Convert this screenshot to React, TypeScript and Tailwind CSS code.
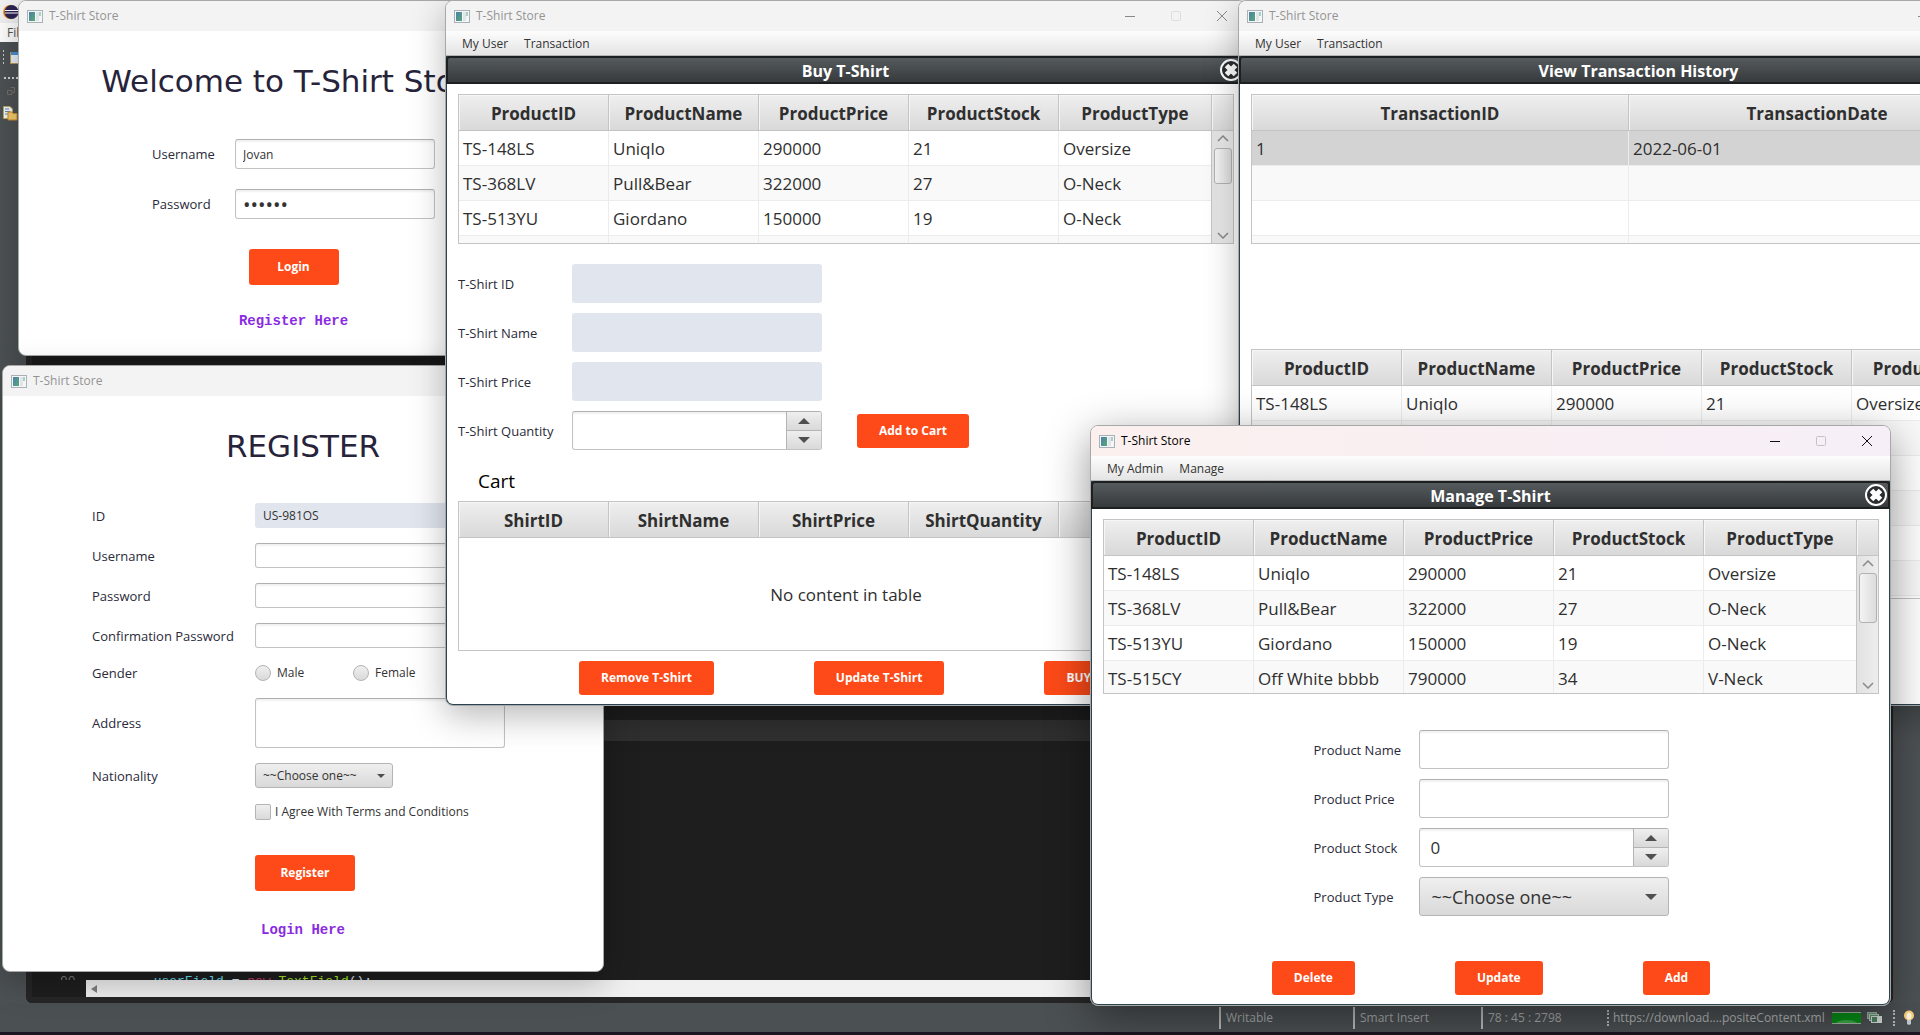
import type { ReactNode } from "react";

const PRODUCTS = [
  ["TS-148LS", "Uniqlo", "290000", "21", "Oversize"],
  ["TS-368LV", "Pull&Bear", "322000", "27", "O-Neck"],
  ["TS-513YU", "Giordano", "150000", "19", "O-Neck"],
  ["TS-515CY", "Off White bbbb", "790000", "34", "V-Neck"],
];
const PRODUCT_COLUMNS = ["ProductID", "ProductName", "ProductPrice", "ProductStock", "ProductType"];
const BLANK_ROW = ["", "", "", "", ""];

const HEAD_CELL =
  "h-9 border-b border-[#c4c4c4] bg-linear-to-b from-[#efefef] to-[#d9d9d9] shadow-[inset_1px_1px_0_#f6f6f6]";

function AppIcon() {
  return (
    <svg width="16" height="13" viewBox="0 0 16 13" className="shrink-0">
      <defs>
        <linearGradient id="pane" x1="0" y1="0" x2="1" y2="1">
          <stop offset="0" stopColor="#4f7fa8" />
          <stop offset="1" stopColor="#54a878" />
        </linearGradient>
      </defs>
      <rect x="0.5" y="0.5" width="15" height="12" fill="#f4f6f7" stroke="#a9b1b6" />
      <rect x="2" y="2" width="6" height="9" fill="url(#pane)" />
      <rect x="9" y="2" width="3" height="9" fill="#e2e5e8" />
      <rect x="12" y="2" width="2" height="4" fill="#a8cfc4" />
    </svg>
  );
}

function WindowButtons({ active }: { active?: boolean }) {
  const ink = active ? "#111111" : "#888888";
  const faint = active ? "#c9c0c6" : "#dddddd";
  const box = "flex h-full w-[46px] items-center justify-center";
  return (
    <div className="ml-auto flex h-full">
      <button aria-label="Minimize" className={box}>
        <svg width="10" height="10"><path d="M0 5.5H10" stroke={ink} /></svg>
      </button>
      <button aria-label="Maximize" className={box}>
        <svg width="10" height="10"><rect x="0.5" y="0.5" width="9" height="9" rx="1" fill="none" stroke={faint} /></svg>
      </button>
      <button aria-label="Close" className={box}>
        <svg width="10" height="10"><path d="M0 0L10 10M10 0L0 10" stroke={ink} /></svg>
      </button>
    </div>
  );
}

function Window({
  place,
  active,
  children,
}: {
  place: string;
  active?: boolean;
  children: ReactNode;
}) {
  return (
    <section
      className={`absolute flex flex-col overflow-hidden rounded-lg border border-[#a8a8a8] bg-white ${
        active ? "shadow-[0_12px_44px_rgba(0,0,0,0.42)]" : "shadow-[0_10px_34px_rgba(0,0,0,0.28)]"
      } ${place}`}
    >
      <header
        className={`flex h-[30px] shrink-0 items-center gap-1.5 pl-2 text-xs ${
          active ? "bg-linear-to-r from-[#fbf0ee] to-[#f7eff8] text-black" : "bg-[#f3f3f3] text-[#939393]"
        }`}
      >
        <AppIcon />
        <h1>T-Shirt Store</h1>
        <WindowButtons active={active} />
      </header>
      {children}
    </section>
  );
}

function MenuBar({ items }: { items: string[] }) {
  return (
    <nav className="flex h-[25px] shrink-0 items-center gap-4 border-b border-[#b4b4b4] bg-linear-to-b from-[#fdfdfd] to-[#e4e4e4] pt-0.5 pl-4 text-xs text-[#333333]">
      {items.map((item) => (
        <button key={item}>{item}</button>
      ))}
    </nav>
  );
}

function Frame({ title, children }: { title: string; children: ReactNode }) {
  return (
    <div className="flex grow flex-col bg-[#2b4250]">
      <div className="relative flex h-7 shrink-0 items-center justify-center rounded-t-sm border-2 border-[#1d2021] bg-linear-to-b from-[#565b5e] to-[#363a3c]">
        <h2 className="pt-0.5 text-base font-bold text-white">{title}</h2>
        <button aria-label="Close frame" className="absolute top-0 right-0">
          <svg width="24" height="24" viewBox="0 0 24 24">
            <circle cx="12" cy="12" r="10" fill="#2b2e30" stroke="#ffffff" strokeWidth="2" />
            <path d="M7.500 7.500L16.500 16.500M16.500 7.500L7.500 16.500" stroke="#ffffff" strokeWidth="5" />
          </svg>
        </button>
      </div>
      <div className="mx-px mb-px flex grow flex-col rounded-b-md bg-white pt-2.5 pr-2.5 pl-[11px]">{children}</div>
    </div>
  );
}

function ScrollColumn({ thumb }: { thumb: string }) {
  return (
    <div className="flex w-[22px] shrink-0 flex-col border-l border-[#c4c4c4]">
      <div className={`${HEAD_CELL} shrink-0`} />
      <div className="flex grow flex-col items-center bg-linear-to-r from-[#e2e2e2] to-[#ededed] py-1">
        <svg width="12" height="7" className="shrink-0"><path d="M1 6L6 1L11 6" fill="none" stroke="#8a8a8a" strokeWidth="1.5" /></svg>
        <div className={`mt-1.5 w-[18px] rounded-[3px] border border-[#b2b2b2] bg-linear-to-r from-[#f4f4f4] to-[#dcdcdc] ${thumb}`} />
        <svg width="12" height="7" className="mt-auto shrink-0"><path d="M1 1L6 6L11 1" fill="none" stroke="#8a8a8a" strokeWidth="1.5" /></svg>
      </div>
    </div>
  );
}

function DataTable({
  columns,
  rows,
  colWidth,
  height,
  selected,
  fill,
  thumb,
}: {
  columns: string[];
  rows: string[][];
  colWidth: string;
  height: string;
  selected?: number;
  fill?: boolean;
  thumb?: string;
}) {
  return (
    <div className={`flex shrink-0 overflow-hidden border border-[#c4c4c4] ${height}`}>
      <div className="min-w-0 grow overflow-hidden">
        <table className="w-full table-fixed border-separate border-spacing-0 text-[17px] text-[#2f2f2f]">
          <thead>
            <tr>
              {columns.map((c, i) => (
                <th
                  key={c}
                  className={`${HEAD_CELL} px-0 pt-0.5 pb-0 font-bold leading-6 ${
                    !fill && i === columns.length - 1 ? "" : `border-r ${colWidth}`
                  }`}
                >
                  {c}
                </th>
              ))}
              {fill && <td className={HEAD_CELL} />}
            </tr>
          </thead>
          <tbody>
            {rows.map((row, r) => (
              <tr key={r} className={r === selected ? "bg-[#d3d3d3]" : r % 2 ? "bg-[#f9f9f9]" : "bg-white"}>
                {row.map((cell, c) => (
                  <td
                    key={c}
                    className={`h-[35px] border-b border-[#ececec] px-1 pt-0.5 pb-0 leading-6 whitespace-nowrap ${
                      !fill && c === row.length - 1 ? "" : "border-r"
                    }`}
                  >
                    {cell}
                  </td>
                ))}
                {fill && <td className="border-b border-[#ececec]" />}
              </tr>
            ))}
          </tbody>
        </table>
      </div>
      {thumb && <ScrollColumn thumb={thumb} />}
    </div>
  );
}

const LABEL = "pt-0.5 text-[13px] text-[#2a2a3a]";
const FIELD =
  "rounded-[3px] border border-[#c2c2c2] border-t-[#b0b0b0] bg-white text-[#333333] shadow-[inset_0_2px_2px_rgba(0,0,0,0.06)] outline-none";
const READONLY = "rounded-[3px] bg-[#e1e5ed] text-[#333333] outline-none";
const PICKER =
  "appearance-none rounded-[3px] border border-[#b4b4b4] bg-linear-to-b from-[#efefef] to-[#d9d9d9] text-[#333333] outline-none";

function ActionButton({ children, size = "h-[34px] px-[22px]" }: { children: ReactNode; size?: string }) {
  return (
    <button className={`shrink-0 rounded-[3px] bg-[#fd4a18] text-xs font-bold whitespace-nowrap text-white ${size}`}>
      {children}
    </button>
  );
}

function Triangle({ up }: { up?: boolean }) {
  return (
    <svg width="12" height="6">
      <path d={up ? "M0 6L6 0L12 6Z" : "M0 0L12 0L6 6Z"} fill="#4f4f4f" />
    </svg>
  );
}

function Spinner({ id, value }: { id: string; value: string }) {
  const step =
    "flex grow items-center justify-center border-l border-[#b4b4b4] bg-linear-to-b from-[#efefef] to-[#d9d9d9]";
  return (
    <div className={`flex h-[39px] w-[250px] overflow-hidden ${FIELD}`}>
      <input id={id} defaultValue={value} className="w-0 grow px-[11px] text-[17px] outline-none" />
      <div className="flex w-[35px] flex-col">
        <button aria-label="Increase" className={`${step} border-b`}><Triangle up /></button>
        <button aria-label="Decrease" className={step}><Triangle /></button>
      </div>
    </div>
  );
}

function Select({ id, size, arrow }: { id: string; size: string; arrow: ReactNode }) {
  return (
    <div className="relative flex w-fit items-center">
      <select id={id} className={`${PICKER} ${size}`}>
        <option>~~Choose one~~</option>
      </select>
      {arrow}
    </div>
  );
}

function LoginWindow() {
  return (
    <Window place="top-0 left-[18px] h-[356px] w-[551px]">
      <div className="flex grow flex-col items-center pt-[30px]">
        <h2 className="font-['DejaVu_Sans',sans-serif] text-[31px] leading-10 text-[#26233a]">Welcome to T-Shirt Store</h2>
        <form className="mt-[38px] grid grid-cols-[83px_200px] items-center gap-y-5">
          <label htmlFor="login-user" className={LABEL}>Username</label>
          <input id="login-user" defaultValue="Jovan" className={`${FIELD} h-[30px] px-[7px] text-xs`} />
          <label htmlFor="login-pass" className={LABEL}>Password</label>
          <input id="login-pass" type="password" defaultValue="jovan1" className={`${FIELD} h-[30px] px-[7px] text-xl`} />
        </form>
        <div className="mt-[30px]"><ActionButton size="h-9 w-[90px]">Login</ActionButton></div>
        <a href="#register" className="mt-[26px] font-['Liberation_Mono',monospace] text-sm font-bold text-[#8a2be2]">
          Register Here
        </a>
      </div>
    </Window>
  );
}

function RegisterWindow() {
  const round =
    "size-4 appearance-none border border-[#b4b4b4] bg-linear-to-b from-[#efefef] to-[#dadada]";
  return (
    <Window place="top-[365px] left-[2px] h-[607px] w-[602px]">
      <div className="flex grow flex-col pt-[30px]">
        <h2 className="text-center font-['DejaVu_Sans',sans-serif] text-[31px] leading-10 text-[#26233a]">REGISTER</h2>
        <form className="mt-[37px] ml-[89px] grid w-fit grid-cols-[163px_250px] items-center gap-y-[15px] text-xs text-[#333333]">
          <label htmlFor="reg-id" className={LABEL}>ID</label>
          <input id="reg-id" readOnly defaultValue="US-981OS" className={`${READONLY} h-[25px] px-2`} />
          <label htmlFor="reg-user" className={LABEL}>Username</label>
          <input id="reg-user" className={`${FIELD} h-[25px] px-2`} />
          <label htmlFor="reg-pass" className={LABEL}>Password</label>
          <input id="reg-pass" type="password" className={`${FIELD} h-[25px] px-2`} />
          <label htmlFor="reg-confirm" className={LABEL}>Confirmation Password</label>
          <input id="reg-confirm" type="password" className={`${FIELD} h-[25px] px-2`} />
          <span className={LABEL}>Gender</span>
          <div className="flex h-5">
            <label className="flex w-[98px] items-center gap-1.5">
              <input type="radio" name="gender" className={`${round} rounded-full`} />
              Male
            </label>
            <label className="flex items-center gap-1.5">
              <input type="radio" name="gender" className={`${round} rounded-full`} />
              Female
            </label>
          </div>
          <label htmlFor="reg-address" className={LABEL}>Address</label>
          <textarea id="reg-address" className={`${FIELD} h-[50px] resize-none px-2`} />
          <label htmlFor="reg-nation" className={LABEL}>Nationality</label>
          <Select
            id="reg-nation"
            size="h-[25px] w-[138px] px-[7px] text-xs"
            arrow={
              <svg width="8" height="4" className="pointer-events-none absolute right-2">
                <path d="M0 0H8L4 4Z" fill="#4f4f4f" />
              </svg>
            }
          />
          <label className="col-start-2 flex h-[17px] items-center gap-1">
            <input type="checkbox" className={`${round} rounded-xs`} />
            I Agree With Terms and Conditions
          </label>
        </form>
        <div className="mt-[35px] ml-[252px]"><ActionButton size="h-9 w-[100px]">Register</ActionButton></div>
        <a href="#login" className="mt-[29px] text-center font-['Liberation_Mono',monospace] text-sm font-bold text-[#8a2be2]">
          Login Here
        </a>
      </div>
    </Window>
  );
}

function BuyWindow() {
  return (
    <Window place="top-0 left-[445px] h-[706px] w-[801px]">
      <MenuBar items={["My User", "Transaction"]} />
      <Frame title="Buy T-Shirt">
        <DataTable columns={PRODUCT_COLUMNS} rows={PRODUCTS} colWidth="w-[150px]" height="h-[150px]" thumb="h-9" />
        <form className="mt-5 grid grid-cols-[114px_250px_auto] items-center gap-y-2.5">
          <label htmlFor="buy-id" className={LABEL}>T-Shirt ID</label>
          <input id="buy-id" readOnly className={`${READONLY} h-[39px] px-2`} />
          <span />
          <label htmlFor="buy-name" className={LABEL}>T-Shirt Name</label>
          <input id="buy-name" readOnly className={`${READONLY} h-[39px] px-2`} />
          <span />
          <label htmlFor="buy-price" className={LABEL}>T-Shirt Price</label>
          <input id="buy-price" readOnly className={`${READONLY} h-[39px] px-2`} />
          <span />
          <label htmlFor="buy-qty" className={LABEL}>T-Shirt Quantity</label>
          <Spinner id="buy-qty" value="" />
          <div className="pl-[35px]"><ActionButton>Add to Cart</ActionButton></div>
        </form>
        <h3 className="mt-[17px] pl-5 text-[19px] leading-7 text-black">Cart</h3>
        <div className="relative mt-1.5">
          <DataTable
            columns={["ShirtID", "ShirtName", "ShirtPrice", "ShirtQuantity"]}
            rows={[]}
            colWidth="w-[150px]"
            height="h-[150px]"
            fill
          />
          <p className="absolute inset-x-0 top-[82px] text-center text-[17px] leading-6 text-[#2f2f2f]">No content in table</p>
        </div>
        <div className="mt-2.5 flex justify-center gap-[100px]">
          <ActionButton>Remove T-Shirt</ActionButton>
          <ActionButton>Update T-Shirt</ActionButton>
          <ActionButton>BUY</ActionButton>
        </div>
      </Frame>
    </Window>
  );
}

function HistoryWindow() {
  return (
    <Window place="top-0 left-[1238px] h-[706px] w-[801px]">
      <MenuBar items={["My User", "Transaction"]} />
      <Frame title="View Transaction History">
        <DataTable
          columns={["TransactionID", "TransactionDate"]}
          rows={[["1", "2022-06-01"], ["", ""], ["", ""], ["", ""]]}
          colWidth="w-[377px]"
          height="h-[150px]"
          selected={0}
          fill
        />
        <div className="mt-[105px]">
          <DataTable
            columns={PRODUCT_COLUMNS}
            rows={[PRODUCTS[0], BLANK_ROW, BLANK_ROW, BLANK_ROW, BLANK_ROW, BLANK_ROW, BLANK_ROW]}
            colWidth="w-[150px]"
            height="h-[250px]"
            fill
          />
        </div>
      </Frame>
    </Window>
  );
}

function ManageWindow() {
  return (
    <Window active place="top-[425px] left-[1090px] h-[581px] w-[801px]">
      <MenuBar items={["My Admin", "Manage"]} />
      <Frame title="Manage T-Shirt">
        <DataTable columns={PRODUCT_COLUMNS} rows={PRODUCTS} colWidth="w-[150px]" height="h-[175px]" thumb="h-[50px]" />
        <form className="mx-auto mt-9 grid grid-cols-[105px_250px] items-center gap-y-2.5">
          <label htmlFor="item-name" className={LABEL}>Product Name</label>
          <input id="item-name" className={`${FIELD} h-[39px] px-2.5 text-[17px]`} />
          <label htmlFor="item-price" className={LABEL}>Product Price</label>
          <input id="item-price" className={`${FIELD} h-[39px] px-2.5 text-[17px]`} />
          <label htmlFor="item-stock" className={LABEL}>Product Stock</label>
          <Spinner id="item-stock" value="0" />
          <label htmlFor="item-type" className={LABEL}>Product Type</label>
          <Select
            id="item-type"
            size="h-[39px] w-[250px] px-3 text-lg"
            arrow={<span className="pointer-events-none absolute right-3 flex"><Triangle /></span>}
          />
        </form>
        <div className="mt-[45px] flex justify-center gap-[100px]">
          <ActionButton>Delete</ActionButton>
          <ActionButton>Update</ActionButton>
          <ActionButton>Add</ActionButton>
        </div>
      </Frame>
    </Window>
  );
}

function Ide() {
  const cell = "flex h-[22px] items-center border-l-2 border-[#b9bcbd] pl-[5px]";
  return (
    <div className="flex h-full flex-col bg-[#4d5254]">
      <div className="flex h-[23px] shrink-0 items-center bg-[#f1f1f1] pl-[3px]">
        <svg width="16" height="16" viewBox="0 0 16 16">
          <circle cx="7" cy="8" r="7" fill="#f7941e" />
          <circle cx="8.5" cy="8" r="7" fill="#2c2255" />
          <path d="M2 6.5H15.5M2 9H15.5" stroke="#ffffff" strokeWidth="1.2" />
        </svg>
      </div>
      <div className="flex h-[19px] shrink-0 items-center bg-white pl-[7px] text-xs text-[#555555]">File</div>
      <div className="flex min-h-0 grow">
        <div className="flex w-[26px] shrink-0 flex-col items-start gap-2.5 pt-2 pl-[3px]">
          <svg width="18" height="14" viewBox="0 0 18 14">
            <path d="M-0.5 0V14" stroke="#c8c8c8" strokeWidth="3" strokeDasharray="2 2" />
            <rect x="7.5" y="2.5" width="12" height="11" fill="#eaf3fb" stroke="#b99a55" />
            <rect x="8" y="2" width="11" height="3" fill="#4a8fd4" />
          </svg>
          <svg width="16" height="22" viewBox="0 0 16 22">
            <path d="M1 4H16" stroke="#d2d2d2" strokeWidth="2" strokeDasharray="2 2" />
            <path d="M7.5 13.5H11.5V18.5H9M4.5 16.5H9V20.5H4.5Z" fill="none" stroke="#75706a" />
          </svg>
          <svg width="15" height="15" viewBox="0 0 15 15">
            <path d="M0.500 0.500H7L9.500 3V12.500H0.500Z" fill="#f7f7f2" stroke="#b9a76a" />
            <path d="M2 3H6M2 5.500H7M2 8H5" stroke="#5a87c4" />
            <path d="M5 6H9L10 7.500H14V14H5Z" fill="#f6cf6b" stroke="#c98a2b" />
          </svg>
        </div>
        <div className="mr-[27px] flex grow flex-col justify-end rounded-b-md border-x-[6px] border-b-[6px] border-[#262626] bg-[#1e1e1e]">
          <div className="h-[21px] bg-[#303030]" />
          <div className="h-[235px]" />
          <pre className="h-1 overflow-hidden pl-[28px] font-['Liberation_Mono',monospace] text-[13px] leading-3 text-[#d9e8f7]">
            <span className="text-[#777777]">90</span>
            {"          "}
            <span className="text-[#66e1f8]">userField</span>
            {" = "}
            <span className="text-[#cc3a6c]">new</span>{" "}
            <span className="text-[#a7ec21]">TextField</span>
            {"();"}
          </pre>
          <div className="ml-[54px] flex h-[17px] items-center bg-[#f0f0f0] pl-[5px]">
            <svg width="6" height="8"><path d="M6 0V8L0 4Z" fill="#808080" /></svg>
          </div>
        </div>
      </div>
      <footer className="flex h-[29px] shrink-0 items-center bg-[#4b5052] pl-[1219px] text-xs text-[#a9acad]">
        <span className={`${cell} w-[134px]`}>Writable</span>
        <span className={`${cell} w-32`}>Smart Insert</span>
        <span className={`${cell} w-[126px]`}>78 : 45 : 2798</span>
        <span className="h-4 w-[6px] border-l-2 border-dotted border-[#b9bcbd]" />
        <span className="w-[219px] whitespace-nowrap text-[#b6b9ba]">https://download....positeContent.xml</span>
        <svg width="29" height="12" viewBox="0 0 29 12">
          <rect width="29" height="12" fill="#078f17" />
          <ellipse cx="14.500" cy="12" rx="11" ry="4" fill="#3cab48" />
          <path d="M0 0.500H29M0 11.500H29" stroke="#a5b5a7" />
        </svg>
        <svg width="16" height="12" viewBox="0 0 16 12" className="ml-1.5">
          <rect x="0.5" y="0.5" width="9" height="6" fill="#6d9a7a" stroke="#9db3a5" />
          <rect x="2.500" y="2.500" width="9" height="6" fill="#5d8f6d" stroke="#b4c4ba" />
          <rect x="4.500" y="4.500" width="10" height="6" fill="#4f8060" stroke="#d5dcd7" />
          <rect x="10" y="5" width="4" height="5" fill="#d5dcd7" />
        </svg>
        <span className="ml-2.5 h-4 w-2.5 border-l-2 border-dotted border-[#b9bcbd]" />
        <svg width="12" height="16" viewBox="0 0 12 16">
          <circle cx="6" cy="5.500" r="5" fill="#ffd27a" />
          <ellipse cx="6" cy="6" rx="2.500" ry="3.500" fill="#fff9e8" />
          <path d="M4 10H8V14L6 15L4 14Z" fill="#c3cbd6" />
        </svg>
      </footer>
      <div className="h-[3px] shrink-0 bg-[#1d1522]" />
    </div>
  );
}

export default function App() {
  return (
    <main className="relative h-screen w-full overflow-hidden font-['Open_Sans',sans-serif]">
      <Ide />
      <LoginWindow />
      <RegisterWindow />
      <BuyWindow />
      <HistoryWindow />
      <ManageWindow />
    </main>
  );
}
